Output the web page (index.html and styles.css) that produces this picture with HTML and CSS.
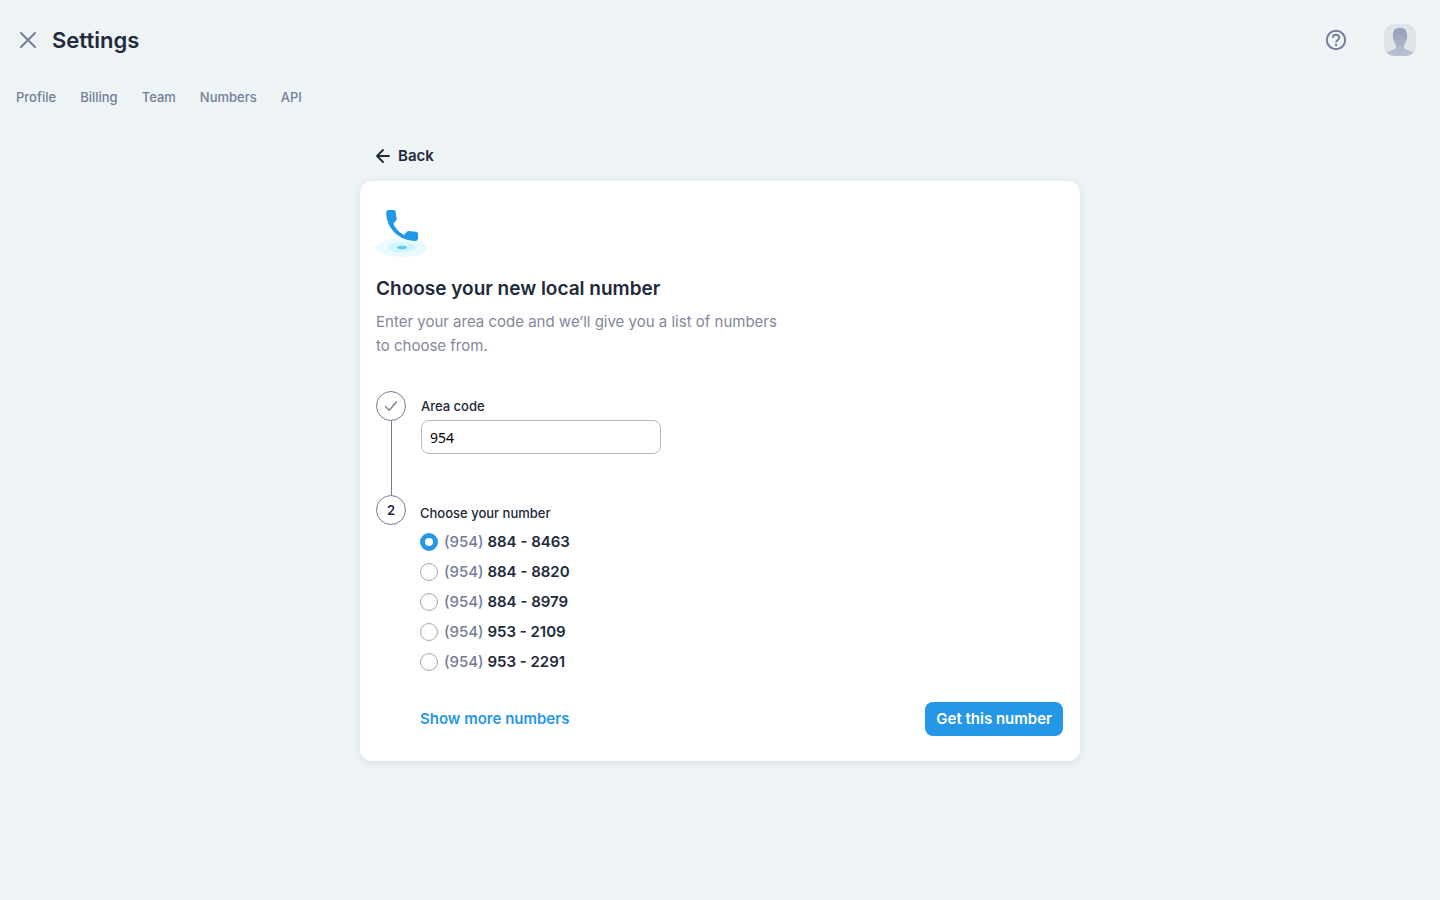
FILE: index.html
```html
<!DOCTYPE html>
<html lang="en">
<head>
<meta charset="utf-8">
<meta name="viewport" content="width=device-width, initial-scale=1">
<title>Settings</title>
<link rel="stylesheet" href="styles.css">
</head>
<body>
<header class="topbar">
  <button class="icon-button" type="button" aria-label="Close">
    <svg width="24" height="24" viewBox="0 0 24 24" fill="none" stroke="currentColor" stroke-width="2" stroke-linecap="round"><path d="M5 5l14 14M19 5L5 19"/></svg>
  </button>
  <h1 class="page-title">Settings</h1>
  <div class="topbar-actions">
    <button class="icon-button" type="button" aria-label="Help">
      <svg width="24" height="24" viewBox="0 0 24 24" fill="none" stroke="currentColor" stroke-width="2"><circle cx="12" cy="12" r="9.2"/><path d="M8.800 9.800C8.800 8 10.200 6.800 12 6.800s3.200 1.200 3.200 3c0 2.100-3.200 2.300-3.200 4.800" stroke-width="1.900"/><circle cx="12" cy="17" r="1.200" fill="currentColor" stroke="none"/></svg>
    </button>
    <button class="icon-button avatar" type="button" aria-label="Account">
      <svg width="32" height="32" viewBox="0 0 32 32">
        <defs><linearGradient id="person" x1="0" y1="0" x2="0" y2="1"><stop offset="0" stop-color="#949db5"/><stop offset="1" stop-color="#bcc4d3"/></linearGradient></defs>
        <rect width="32" height="32" fill="#dfe4e9"/>
        <path d="M16 4c-5 0-7.300 2.700-7 7.500.1.800-.4 1.300-.1 2.700.2 1.300.6 1.600 1.100 2.300.5 2.200 1.100 3.500 2 4.500v3C11 26 5.500 26.500 2.500 29L0 32h32l-2.500-3C26.500 26.500 21 26 20 24v-3c.9-1 1.500-2.300 2-4.500.5-.7.900-1 1.100-2.300.3-1.400-.2-1.900-.1-2.700.3-4.800-2-7.500-7-7.500z" fill="url(#person)"/>
      </svg>
    </button>
  </div>
</header>
<nav class="tabs" aria-label="Settings sections">
  <a href="#profile">Profile</a>
  <a href="#billing">Billing</a>
  <a href="#team">Team</a>
  <a href="#numbers">Numbers</a>
  <a href="#api">API</a>
</nav>
<main class="content">
  <a class="back" href="#numbers">
    <svg width="14" height="14" viewBox="0 0 14 14" fill="none" stroke="currentColor" stroke-width="1.800" stroke-linecap="round" stroke-linejoin="round"><path d="M13 7H1M7 1L1 7l6 6"/></svg>
    <span>Back</span>
  </a>
  <form class="card">
    <svg class="card-art" width="52" height="52" viewBox="0 0 52 52">
      <ellipse cx="26" cy="42.500" rx="25.500" ry="9.500" fill="#e9fbfe"/>
      <ellipse cx="26" cy="42.500" rx="14" ry="5" fill="#d0f5fd"/>
      <ellipse cx="26" cy="42.500" rx="5" ry="1.700" fill="#63c8f2"/>
      <path d="M12.500 5h5c1.400 0 2.100.7 2.200 2 .1 2.300.3 4.200.9 6.200.3 1 .1 1.700-.5 2.400l-2.800 3.200c2.400 5 5.800 8.600 10.700 11.200l2.600-3.100c.7-.8 1.500-1 2.500-.8 2 .4 4 .6 6.600.7 1.500.1 2.300.9 2.300 2.200v4c0 1.900-1 2.900-2.600 2.900C24 35.900 10.200 24 10.200 7.500c0-1.500.8-2.500 2.300-2.500z" fill="#2597e8"/>
    </svg>
    <h2 class="card-title">Choose your new local number</h2>
    <p class="card-text">Enter your area code and we’ll give you a list of numbers to choose from.</p>
    <div class="step">
      <div class="step-rail">
        <span class="step-badge"><svg width="14" height="12" viewBox="0 0 14 12" fill="none" stroke="#747b96" stroke-width="1.300" stroke-linecap="round" stroke-linejoin="round"><path d="M1.500 6.500l3.700 3.800L12.500 2"/></svg></span>
        <span class="step-line"></span>
      </div>
      <div class="step-body step-area">
        <label class="label" for="area">Area code</label>
        <input class="text-input" id="area" type="text" value="954">
      </div>
    </div>
    <div class="step">
      <div class="step-rail"><span class="step-badge">2</span></div>
      <fieldset class="step-body step-choices">
        <legend class="label">Choose your number</legend>
        <label class="choice"><input type="radio" name="number" checked><span><span class="prefix">(954)</span> 884 - 8463</span></label>
        <label class="choice"><input type="radio" name="number"><span><span class="prefix">(954)</span> 884 - 8820</span></label>
        <label class="choice"><input type="radio" name="number"><span><span class="prefix">(954)</span> 884 - 8979</span></label>
        <label class="choice"><input type="radio" name="number"><span><span class="prefix">(954)</span> 953 - 2109</span></label>
        <label class="choice"><input type="radio" name="number"><span><span class="prefix">(954)</span> 953 - 2291</span></label>
      </fieldset>
    </div>
    <div class="card-footer">
      <button class="link-button" type="button">Show more numbers</button>
      <button class="primary-button" type="submit">Get this number</button>
    </div>
  </form>
</main>
</body>
</html>
```
FILE: styles.css
```css
* {
  box-sizing: border-box;
}

body {
  margin: 0;
  min-height: 100vh;
  background: #eef3f6;
  color: #212a3a;
  font-family: Inter, "Liberation Sans", sans-serif;
  font-size: 15px;
  line-height: 24px;
}

button,
input {
  font: inherit;
}

button {
  border: 0;
  padding: 0;
  background: none;
  cursor: pointer;
}

a {
  color: inherit;
  text-decoration: none;
}

.topbar {
  display: flex;
  align-items: center;
  gap: 12px;
  padding: 24px 24px 24px 16px;
}

.topbar-actions {
  display: flex;
  align-items: center;
  gap: 36px;
  margin-left: auto;
}

.icon-button {
  display: flex;
  color: #747d99;
}

.avatar {
  overflow: hidden;
  border-radius: 10px;
}

.page-title {
  margin: 0;
  font-size: 22px;
  font-weight: 600;
  line-height: 32px;
}

.tabs {
  display: flex;
  gap: 24px;
  padding: 7px 16px;
  color: #747d99;
  font-size: 13px;
  font-weight: 500;
  line-height: 20px;
}

.content {
  max-width: 720px;
  margin: 0 auto;
  padding: 30px 0 48px;
}

.back {
  display: inline-flex;
  align-items: center;
  gap: 8px;
  margin: 0 16px 13px;
  font-weight: 600;
  vertical-align: top;
}

.card {
  padding: 24px 17px 25px 16px;
  border-radius: 12px;
  background: #fff;
  box-shadow: 0 2px 8px rgba(30, 45, 70, 0.1);
}

.card-art {
  display: block;
}

.card-title {
  margin: 18px 0 7px;
  font-size: 19px;
  font-weight: 600;
  line-height: 28px;
}

.card-text {
  max-width: 404px;
  margin: 0 0 33px;
  color: #82889c;
}

.step {
  display: flex;
  gap: 14px;
}

.step-rail {
  display: flex;
  flex-direction: column;
  align-items: center;
}

.step-badge {
  display: flex;
  flex: none;
  align-items: center;
  justify-content: center;
  width: 30px;
  height: 30px;
  border: 1px solid #747b96;
  border-radius: 50%;
  font-size: 13px;
  font-weight: 600;
}

.step-line {
  flex: 1;
  width: 1px;
  background: #747b96;
}

.step-body {
  min-width: 0;
  margin: 0;
  border: 0;
}

.step-area {
  display: flex;
  flex-direction: column;
  padding: 5px 1px 41px;
}

.step-choices {
  padding: 4px 0 0;
}

.label {
  padding: 0;
  font-size: 13px;
  font-weight: 500;
  line-height: 20px;
}

.step-choices .label {
  padding-top: 8px;
}

.text-input {
  width: 240px;
  max-width: 100%;
  height: 34px;
  margin-top: 4px;
  padding: 0 8px;
  border: 1px solid #b4b8c6;
  border-radius: 8px;
  background: #fff;
  color: #000;
  font-family: "Noto Sans", sans-serif;
  font-size: 14px;
}

.choice {
  display: flex;
  align-items: center;
  gap: 6px;
  height: 30px;
  font-weight: 600;
}

.choice input {
  appearance: none;
  width: 18px;
  height: 18px;
  margin: 0;
  border: 1px solid #aaa;
  border-radius: 50%;
  background: #fdfdfd;
}

.choice input:checked {
  border: 5px solid #2597e8;
  background: #fff;
}

.prefix {
  color: #747d99;
  font-weight: 500;
}

.card-footer {
  display: flex;
  flex-wrap: wrap;
  align-items: center;
  justify-content: space-between;
  gap: 12px;
  margin-top: 25px;
  padding-left: 44px;
}

.link-button {
  color: #2597e8;
  font-weight: 600;
}

.primary-button {
  height: 34px;
  padding: 0 11px;
  border-radius: 8px;
  background: #2597e8;
  color: #fff;
  font-weight: 600;
}
```
